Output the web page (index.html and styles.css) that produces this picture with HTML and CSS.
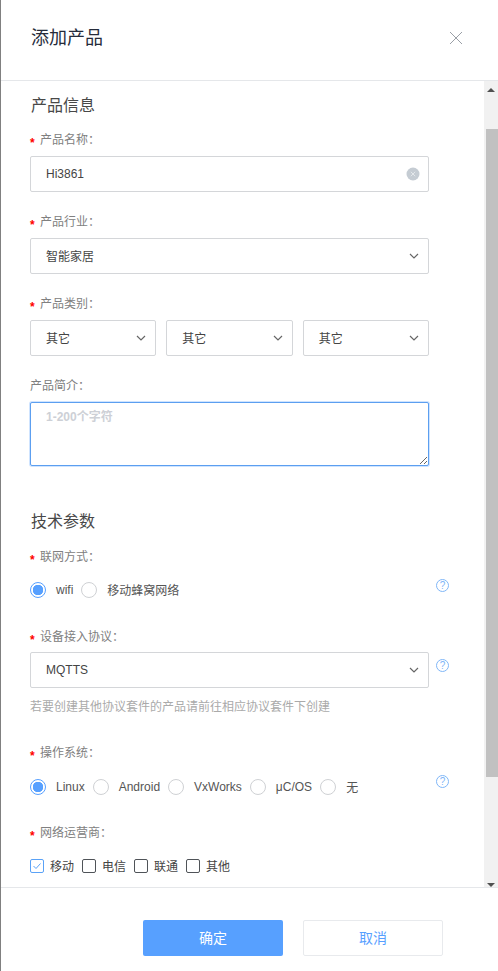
FILE: index.html
```html
<!DOCTYPE html>
<html lang="zh-CN">
<head>
    <meta charset="UTF-8">
    <title>添加产品</title>
    <link rel="stylesheet" href="styles.css">
</head>
<body>
    <div class="dialog">
        <div class="dialog-edge"></div>
        <div class="dialog-header">
            <h2>添加产品</h2>
            <svg class="close-icon" width="14" height="14" viewBox="0 0 14 14"><path d="M1 1L13 13M13 1L1 13" stroke="#9a9fa6" stroke-width="1" fill="none"/></svg>
        </div>
        <div class="dialog-body">
            <div class="form-scroll">
                <h3 class="section-title">产品信息</h3>

                <div class="field-label"><span class="req">*</span>产品名称：</div>
                <div class="input-box control">
                    <input type="text" value="Hi3861">
                    <span class="clear-icon"><svg width="14" height="14" viewBox="0 0 14 14"><circle cx="7" cy="7" r="6.5" fill="#c5ccd3"/><path d="M4.8 4.8L9.2 9.2M9.2 4.8L4.8 9.2" stroke="#e4e8eb" stroke-width="1"/></svg></span>
                </div>

                <div class="field-label gap-19"><span class="req">*</span>产品行业：</div>
                <div class="select control"><span class="cjk">智能家居</span><svg class="chevron" width="10" height="6" viewBox="0 0 10 6"><path d="M1 1L5 5L9 1" stroke="#666" stroke-width="1.2" fill="none"/></svg></div>

                <div class="field-label gap-19"><span class="req">*</span>产品类别：</div>
                <div class="select-row control">
                    <div class="select"><span class="cjk">其它</span><svg class="chevron" width="10" height="6" viewBox="0 0 10 6"><path d="M1 1L5 5L9 1" stroke="#666" stroke-width="1.2" fill="none"/></svg></div>
                    <div class="select"><span class="cjk">其它</span><svg class="chevron" width="10" height="6" viewBox="0 0 10 6"><path d="M1 1L5 5L9 1" stroke="#666" stroke-width="1.2" fill="none"/></svg></div>
                    <div class="select"><span class="cjk">其它</span><svg class="chevron" width="10" height="6" viewBox="0 0 10 6"><path d="M1 1L5 5L9 1" stroke="#666" stroke-width="1.2" fill="none"/></svg></div>
                </div>

                <div class="field-label gap-19">产品简介：</div>
                <textarea class="textarea control" placeholder="1-200个字符"></textarea>

                <h3 class="section-title gap-45">技术参数</h3>

                <div class="field-label gap-15"><span class="req">*</span>联网方式：</div>
                <div class="help-row row-radio-1">
                    <div class="radio-group">
                        <span class="radio checked"></span><span class="option">wifi</span>
                        <span class="radio"></span><span class="option cjk">移动蜂窝网络</span>
                    </div>
                    <svg class="help-icon help-up-3" width="13" height="13" viewBox="0 0 13 13"><circle cx="6.5" cy="6.5" r="6" fill="none" stroke="#7fb6f7"/><text x="6.5" y="10" text-anchor="middle" class="help-mark">?</text></svg>
                </div>

                <div class="field-label gap-28"><span class="req">*</span>设备接入协议：</div>
                <div class="help-row row-select">
                    <div class="select control"><span>MQTTS</span><svg class="chevron" width="10" height="6" viewBox="0 0 10 6"><path d="M1 1L5 5L9 1" stroke="#666" stroke-width="1.2" fill="none"/></svg></div>
                    <svg class="help-icon help-down-7" width="13" height="13" viewBox="0 0 13 13"><circle cx="6.5" cy="6.5" r="6" fill="none" stroke="#7fb6f7"/><text x="6.5" y="10" text-anchor="middle" class="help-mark">?</text></svg>
                </div>
                <div class="hint">若要创建其他协议套件的产品请前往相应协议套件下创建</div>

                <div class="field-label gap-25"><span class="req">*</span>操作系统：</div>
                <div class="help-row row-radio-2">
                    <div class="radio-group">
                        <span class="radio checked"></span><span class="option">Linux</span>
                        <span class="radio"></span><span class="option">Android</span>
                        <span class="radio"></span><span class="option">VxWorks</span>
                        <span class="radio"></span><span class="option">μC/OS</span>
                        <span class="radio"></span><span class="option cjk">无</span>
                    </div>
                    <svg class="help-icon help-up-4" width="13" height="13" viewBox="0 0 13 13"><circle cx="6.5" cy="6.5" r="6" fill="none" stroke="#7fb6f7"/><text x="6.5" y="10" text-anchor="middle" class="help-mark">?</text></svg>
                </div>

                <div class="field-label gap-27"><span class="req">*</span>网络运营商：</div>
                <div class="check-group">
                    <span class="check checked"><svg width="12" height="12" viewBox="0 0 12 12"><path d="M2.5 6L5 8.5L9.5 3.5" stroke="#5aa2f7" stroke-width="1" fill="none"/></svg></span><span class="option cjk">移动</span>
                    <span class="check"></span><span class="option cjk">电信</span>
                    <span class="check"></span><span class="option cjk">联通</span>
                    <span class="check"></span><span class="option cjk">其他</span>
                </div>
            </div>
            <div class="scrollbar">
                <div class="scroll-top"><span class="arrow-up"></span></div>
                <div class="scroll-thumb"></div>
                <div class="scroll-bottom"><span class="arrow-down"></span></div>
            </div>
        </div>
        <div class="dialog-footer">
            <button class="button button-primary"><span class="cjk">确定</span></button>
            <button class="button button-default"><span class="cjk">取消</span></button>
        </div>
    </div>
</body>
</html>
```

FILE: styles.css
```css
* {
    box-sizing: border-box;
}

body {
    margin: 0;
    background: #fff;
    font-family: "Liberation Sans", "Noto Sans CJK SC", sans-serif;
    font-size: 12px;
    color: #333;
}

.dialog {
    position: relative;
    width: 498px;
    height: 971px;
    border-left: 1px solid #808080;
    display: flex;
    flex-direction: column;
    overflow: hidden;
}

.dialog-edge {
    position: absolute;
    left: -1px;
    top: 0;
    width: 1px;
    height: 48px;
    background: #333;
}

.dialog-header {
    height: 81px;
    flex: none;
    border-bottom: 1px solid #e5e7ea;
    padding-left: 30px;
    padding-right: 35px;
    display: flex;
    align-items: center;
    justify-content: space-between;
}

.dialog-header h2 {
    margin: 0 0 8px;
    font-size: 18px;
    font-weight: normal;
    color: #252b3a;
}

.close-icon {
    margin-bottom: 5px;
}

.dialog-body {
    height: 806px;
    flex: none;
    display: flex;
}

.form-scroll {
    width: 483px;
    flex: none;
    overflow: hidden;
    padding: 14px 0 0 29px;
}

.section-title {
    margin: 0 0 14px;
    padding-left: 1px;
    height: 20px;
    line-height: 21px;
    font-size: 16px;
    font-weight: normal;
    color: #484848;
}

.field-label {
    height: 20px;
    line-height: 22px;
    color: #808080;
    margin-bottom: 7px;
}

.req {
    display: inline-block;
    width: 10px;
    color: #f00;
    font-weight: bold;
    line-height: 12px;
    position: relative;
    top: 3px;
}

.gap-15 { margin-top: 15px; }
.gap-19 { margin-top: 19px; }
.gap-25 { margin-top: 25px; }
.gap-27 { margin-top: 27px; }
.gap-28 { margin-top: 28px; }
.gap-45 { margin-top: 45px; }

.section-title.gap-45 {
    margin-bottom: 0;
}

.control {
    width: 399px;
}

.input-box,
.select {
    height: 36px;
    border: 1px solid #d4d6d9;
    border-radius: 2px;
    display: flex;
    align-items: center;
    justify-content: space-between;
    padding: 0 9px 0 15px;
    background: #fff;
    color: #444;
}

.input-box input {
    border: none;
    outline: none;
    padding: 0;
    flex: 1;
    font: inherit;
    color: #444;
}

.cjk {
    position: relative;
    top: -1px;
}

.clear-icon {
    display: flex;
    margin-right: -1px;
}

.select-row {
    display: flex;
    gap: 10px;
}

.select-row .select {
    flex: 1;
}

.textarea {
    display: block;
    height: 64px;
    margin-bottom: 0;
    padding: 4px 15px;
    border: 1px solid #5c9ff0;
    border-radius: 2px;
    box-shadow: 0 0 0 1px #cfe4ff;
    outline: none;
    font: inherit;
    font-weight: bold;
}

.textarea::placeholder {
    color: #cdd0d6;
}

.help-row {
    display: flex;
    align-items: flex-start;
}

.row-radio-1 {
    margin-top: 16px;
}

.row-radio-2 {
    margin-top: 17px;
}

.row-select {
    margin-top: -1px;
}

.help-row .radio-group {
    width: 399px;
    flex: none;
}

.help-icon {
    flex: none;
    margin-left: 7px;
}

.help-up-3 { margin-top: -3px; }
.help-up-4 { margin-top: -4px; }
.help-down-7 { margin-top: 7px; }

.help-mark {
    font-size: 10px;
    fill: #7fb6f7;
}

.radio-group,
.check-group {
    display: flex;
    align-items: center;
}

.radio-group {
    height: 16px;
}

.radio {
    width: 16px;
    height: 16px;
    flex: none;
    border: 1px solid #cfd1d4;
    border-radius: 50%;
    margin-right: 10px;
}

.radio.checked {
    border-color: #57a0ff;
    background: radial-gradient(circle, #57a0ff 0 5px, #fff 5.5px);
}

.radio-group .option {
    margin-right: 8px;
    color: #555;
}

.hint {
    margin-top: 9px;
    height: 20px;
    line-height: 20px;
    color: #aaa;
}

.check-group {
    height: 14px;
    margin-top: 17px;
}

.check {
    width: 14px;
    height: 14px;
    flex: none;
    border: 1px solid #4f5358;
    border-radius: 2px;
    margin-right: 6px;
    display: flex;
    align-items: center;
    justify-content: center;
}

.check.checked {
    border-color: #5aa2f7;
}

.check-group .option {
    margin-right: 8px;
    color: #444;
}

.scrollbar {
    width: 14px;
    flex: none;
    background: #f1f1f1;
    display: flex;
    flex-direction: column;
}

.scroll-top {
    height: 48px;
    padding-top: 7px;
    display: flex;
    justify-content: center;
}

.scroll-thumb {
    height: 648px;
    margin-left: 2px;
    background: #c1c1c1;
}

.scroll-bottom {
    flex: 1;
    display: flex;
    align-items: flex-end;
    justify-content: center;
    padding-bottom: 0;
}

.arrow-up {
    width: 0;
    height: 0;
    border-left: 4px solid transparent;
    border-right: 4px solid transparent;
    border-bottom: 4px solid #505050;
}

.arrow-down {
    width: 0;
    height: 0;
    border-left: 4px solid transparent;
    border-right: 4px solid transparent;
    border-top: 4px solid #505050;
}

.dialog-footer {
    flex: 1;
    border-top: 1px solid #e5e7ea;
    padding: 32px 55px 0 0;
    display: flex;
    justify-content: flex-end;
    gap: 20px;
}

.button {
    width: 140px;
    height: 36px;
    border-radius: 2px;
    font: inherit;
    font-size: 14px;
    cursor: pointer;
}

.button-primary {
    background: #57a0ff;
    border: none;
    color: #fff;
}

.button-default {
    background: #fff;
    border: 1px solid #e8eaed;
    color: #57a0ff;
}
```
